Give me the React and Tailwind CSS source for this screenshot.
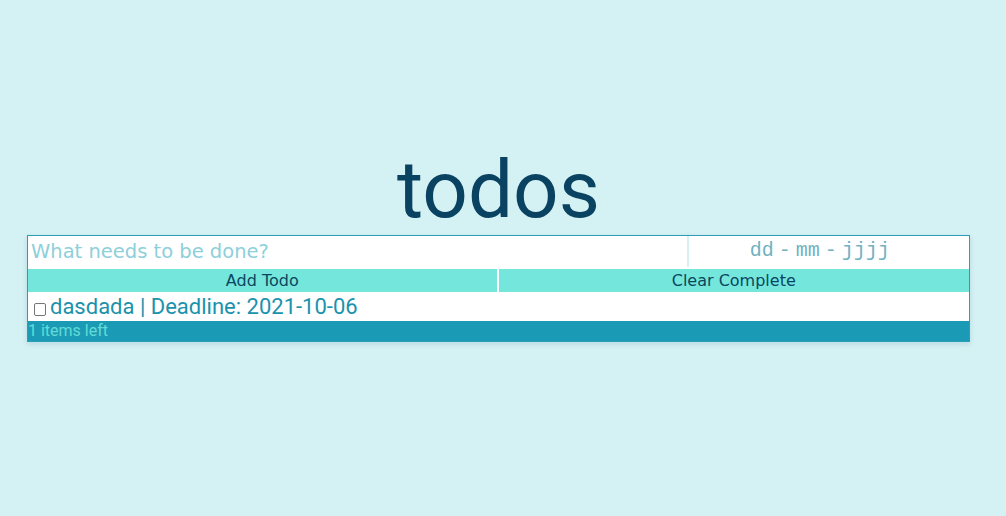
import React, { useState } from 'react';

export default function App() {
  const [text, setText] = useState('');
  const [done, setDone] = useState(false);

  return (
    <div className="min-h-[516px] w-full bg-[#d4f1f4] font-[family-name:'Roboto',sans-serif]">
      <div className="w-[997px] pt-[150px] flex flex-col items-center">
        <h1 className="text-[80px] leading-[80px] text-[#0a4261] font-normal mb-[5px]">todos</h1>

        <div className="w-[943px] border border-[#2a9fb6] bg-white shadow-[0_2px_5px_rgba(0,80,100,0.14)]">
          {/* invoer */}
          <div className="flex h-[31px]">
            <input
              type="text"
              value={text}
              onChange={(e) => setText(e.target.value)}
              placeholder="What needs to be done?"
              className="w-[70%] px-[3px] text-[19.5px] text-[#1c93ad] placeholder:text-[#8dcfda] outline-none font-[family-name:'DejaVu_Sans',sans-serif]"
            />
            <div className="w-[30%] border-l-2 border-[#d7f0f3] flex items-center justify-center pr-[18px] pb-[2px]">
              <span className="font-[family-name:'Liberation_Mono','Courier_New',monospace] text-[20px] text-[#6fb2c2] flex items-center">
                <span>dd</span>
                <span className="px-[5px]">-</span>
                <span>mm</span>
                <span className="px-[5px]">-</span>
                <span>jjjj</span>
              </span>
            </div>
          </div>

          {/* knoppen */}
          <div className="flex border-t-2 border-white">
            <button className="w-1/2 h-[23px] bg-[#74e6dc] text-[#0b4660] text-[16px] leading-[23px] border-r-2 border-white font-[family-name:'DejaVu_Sans',sans-serif]">
              Add Todo
            </button>
            <button className="w-1/2 h-[23px] bg-[#74e6dc] text-[#0b4660] text-[16px] leading-[23px] font-[family-name:'DejaVu_Sans',sans-serif]">
              Clear Complete
            </button>
          </div>

          {/* lijst */}
          <div className="h-[29px] flex items-center pl-[6px]">
            <button
              onClick={() => setDone(!done)}
              className={done
                ? 'w-[12px] h-[13px] border-[1.5px] border-[#767676] rounded-[2px] bg-[#1a9ab4] mt-[6px] mr-[4px]'
                : 'w-[12px] h-[13px] border-[1.5px] border-[#767676] rounded-[2px] bg-white mt-[6px] mr-[4px]'}
            />
            <span className="text-[22px] leading-[29px] text-[#1b92ac]">dasdada | Deadline: 2021-10-06</span>
          </div>

          <div className="h-[20px] bg-[#1a9ab4] text-[16px] leading-[19px] text-[#62dcd6]">1 items left</div>
        </div>
      </div>
    </div>
  );
}
